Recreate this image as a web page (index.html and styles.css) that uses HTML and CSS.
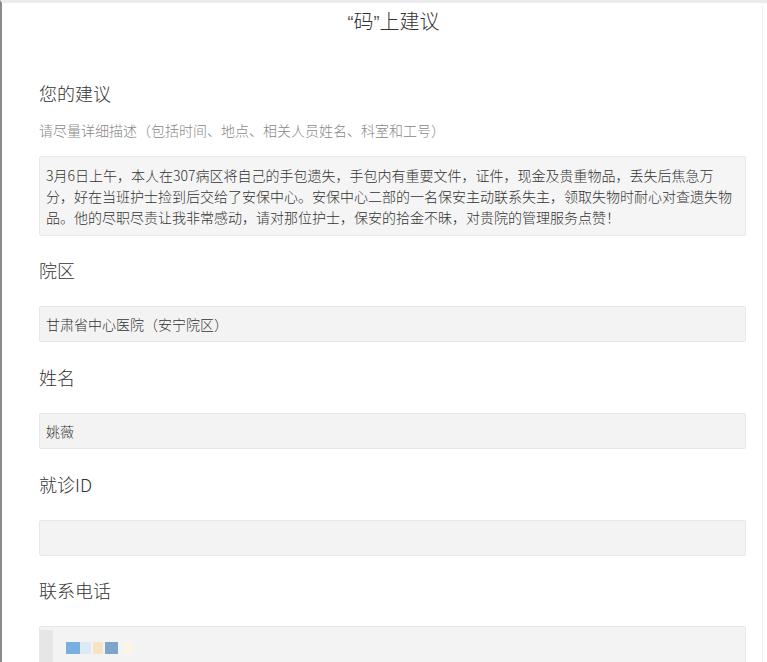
FILE: index.html
```html
<!DOCTYPE html>
<html lang="zh-CN">
<head>
<meta charset="utf-8">
<title>“码”上建议</title>
<link rel="stylesheet" href="styles.css">
</head>
<body>
<div class="frame">
  <div class="page">
    <h1 class="title"><span class="q">“</span>码<span class="q">”</span>上建议</h1>
    <section class="field first">
      <div class="label">您的建议</div>
      <div class="hint">请尽量详细描述（包括时间、地点、相关人员姓名、科室和工号）</div>
      <div class="textarea">3月6日上午，本人在307病区将自己的手包遗失，手包内有重要文件，证件，现金及贵重物品，丢失后焦急万<br>分，好在当班护士捡到后交给了安保中心。安保中心二部的一名保安主动联系失主，领取失物时耐心对查遗失物<br>品。他的尽职尽责让我非常感动，请对那位护士，保安的拾金不昧，对贵院的管理服务点赞！</div>
    </section>
    <section class="field second">
      <div class="label">院区</div>
      <div class="input">甘肃省中心医院（安宁院区）</div>
    </section>
    <section class="field">
      <div class="label">姓名</div>
      <div class="input">姚薇</div>
    </section>
    <section class="field">
      <div class="label">就诊ID</div>
      <div class="input"></div>
    </section>
    <section class="field last">
      <div class="label">联系电话</div>
      <div class="input phone">
        <span class="strip"></span>
        <span class="blur">
          <span class="px c1"></span><span class="px c2"></span><span class="px c3"></span><span class="px c4"></span><span class="px c5"></span>
        </span>
      </div>
    </section>
  </div>
</div>
</body>
</html>
```

FILE: styles.css
```css
html, body {
  margin: 0;
  padding: 0;
  background: #ffffff;
}

body {
  font-family: "Noto Sans CJK SC", "Microsoft YaHei", sans-serif;
  color: #333333;
}

.frame {
  border-top: 3px solid #ececec;
  border-left: 2px solid #8c8c8c;
  padding-right: 4px;
  min-height: 700px;
}

.page {
  border-right: 1px solid #eeeeee;
  padding: 0 16px 40px 37px;
  min-height: 700px;
}

.title {
  margin: 3px 0 0;
  padding-left: 2px;
  font-size: 20px;
  line-height: 30px;
  font-weight: 300;
  text-align: center;
  color: #333333;
}

.q {
  font-family: "Liberation Sans", sans-serif;
  font-size: 18px;
  color: #555555;
}

.field {
  margin-top: 23px;
}

.field.first {
  margin-top: 43px;
}

.field.second {
  margin-top: 22px;
}

.field.last {
  margin-top: 22px;
}

.label {
  font-size: 18px;
  line-height: 24px;
  font-weight: 300;
  color: #333333;
}

.hint {
  margin-top: 15px;
  font-size: 14px;
  line-height: 20px;
  font-weight: 300;
  color: #888888;
}

.textarea {
  margin-top: 16px;
  background: #f5f5f5;
  border: 1px solid #e8e8e8;
  border-radius: 2px;
  padding: 8px 6px 7px;
  font-size: 14px;
  line-height: 21px;
  font-weight: 300;
  color: #333333;
  white-space: nowrap;
}

.input {
  margin-top: 24px;
  height: 34px;
  background: #f3f3f3;
  border: 1px solid #e8e8e8;
  border-radius: 2px;
  padding: 0 6px;
  font-size: 14px;
  line-height: 34px;
  font-weight: 300;
  color: #333333;
  display: flex;
  align-items: center;
}

.input.phone {
  padding: 0;
  height: 40px;
  align-items: stretch;
}

.strip {
  width: 13px;
  margin-top: 3px;
  background: #e6e6e6;
}

.blur {
  display: flex;
  align-items: flex-start;
  padding: 15px 0 0 13px;
  filter: blur(0.5px);
}

.px {
  display: block;
  height: 12px;
}

.c1 { width: 14px; background: #78afe0; }
.c2 { width: 11px; background: #dcebf3; }
.c3 { width: 10px; margin-left: 2px; background: #f6e4c2; }
.c4 { width: 13px; margin-left: 2px; background: #7ea5cb; }
.c5 { width: 7px; margin-left: 7px; background: #fbf5e2; }
```
